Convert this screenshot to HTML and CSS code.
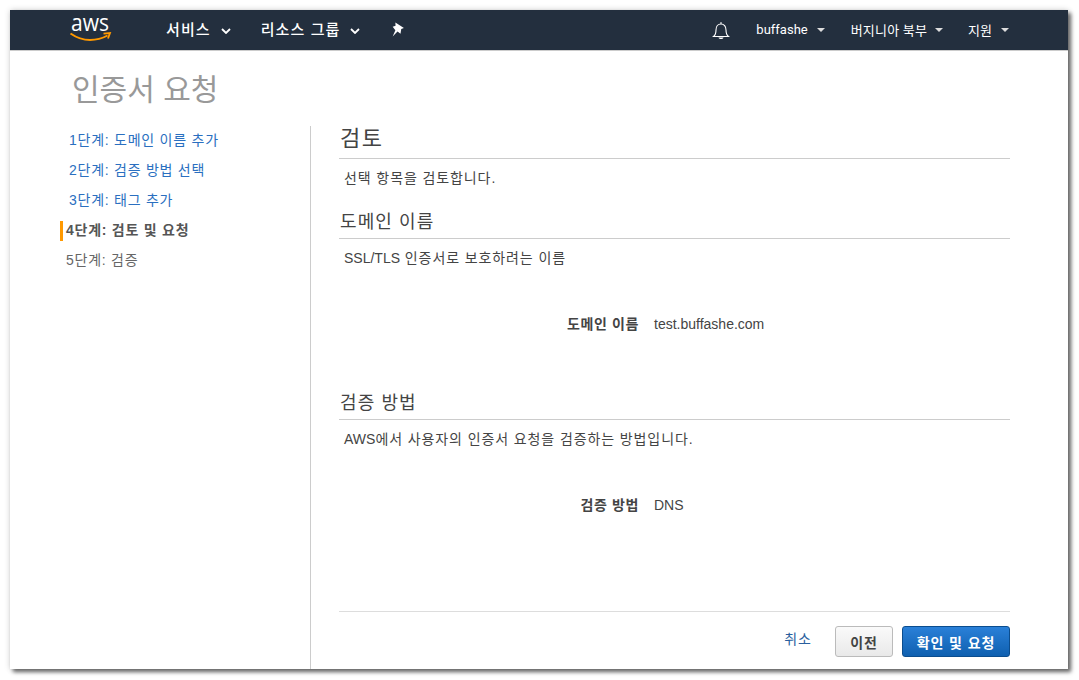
FILE: index.html
```html
<!DOCTYPE html>
<html lang="ko">
<head>
<meta charset="utf-8">
<title>인증서 요청</title>
<link rel="stylesheet" href="styles.css">
</head>
<body>
<div class="window">
  <header class="nav">
    <svg class="logo" viewBox="0 -6 42 34" width="42" height="34">
      <text x="1" y="15" class="logo-text" textLength="38" lengthAdjust="spacingAndGlyphs">aws</text>
      <path d="M0.5 17.5C7 22 13 24 20 24C27 24 33 22 37.5 19.5" fill="none" stroke="#f90" stroke-width="2"/>
      <path d="M33.5 17.6L40 17L38 22.5" fill="none" stroke="#f90" stroke-width="1.8"/>
    </svg>
    <a class="nav-main first">서비스</a>
    <svg class="chev" viewBox="0 0 10 6" width="10" height="6"><path d="M1 1L5 5L9 1" fill="none" stroke="#fff" stroke-width="1.8"/></svg>
    <a class="nav-main second">리소스 그룹</a>
    <svg class="chev" viewBox="0 0 10 6" width="10" height="6"><path d="M1 1L5 5L9 1" fill="none" stroke="#fff" stroke-width="1.8"/></svg>
    <svg class="pin" viewBox="0 0 14 14" width="15" height="15"><path d="M5 0.500L13 5.500L10.500 6.500L9.800 11L7 8.800L2.500 13.500L5 7.600L2.500 4.500L5.200 3.400Z" fill="#fff"/></svg>
    <div class="spacer"></div>
    <svg class="bell" viewBox="0 0 18 20" width="18" height="20"><path d="M1.500 15.500C3.500 14 4 12 4 9C4 5.500 6 3 9 3C12 3 14 5.500 14 9C14 12 14.500 14 16.500 15.500Z" fill="none" stroke="#fff" stroke-width="1.100"/><path d="M9 1V3" stroke="#fff"/><path d="M6.500 16.500C7 18.500 11 18.500 11.500 16.500Z" fill="#fff"/></svg>
    <a class="nav-sub user">buffashe</a>
    <span class="caret"></span>
    <a class="nav-sub region">버지니아 북부</a>
    <span class="caret tight"></span>
    <a class="nav-sub support">지원</a>
    <span class="caret"></span>
  </header>
  <h1 class="page-title">인증서 요청</h1>
  <div class="layout">
    <nav class="steps">
      <a class="step link">1단계: 도메인 이름 추가</a>
      <a class="step link">2단계: 검증 방법 선택</a>
      <a class="step link">3단계: 태그 추가</a>
      <a class="step current">4단계: 검토 및 요청</a>
      <a class="step todo">5단계: 검증</a>
    </nav>
    <main class="content">
      <h2 class="title-lg">검토</h2>
      <p class="desc">선택 항목을 검토합니다.</p>
      <h3 class="title-md domain-title">도메인 이름</h3>
      <p class="desc"><span class="latin">SSL/TLS</span> 인증서로 보호하려는 이름</p>
      <dl class="field domain-field"><dt>도메인 이름</dt><dd>test.buffashe.com</dd></dl>
      <h3 class="title-md method-title">검증 방법</h3>
      <p class="desc"><span class="latin">AWS</span>에서 사용자의 인증서 요청을 검증하는 방법입니다.</p>
      <dl class="field method-field"><dt>검증 방법</dt><dd>DNS</dd></dl>
      <footer class="actions">
        <a class="cancel">취소</a>
        <button class="btn prev">이전</button>
        <button class="btn primary">확인 및 요청</button>
      </footer>
    </main>
  </div>
</div>
</body>
</html>
```
FILE: styles.css
```css
* { box-sizing: border-box; }
html, body { margin: 0; height: 100%; background: #fff; }
body {
  padding: 10px 0 0 10px;
  overflow: hidden;
  font-family: "Liberation Sans", "Noto Sans CJK KR", sans-serif;
  font-size: 14px;
  color: #444;
}
.window {
  width: 1058px;
  height: 659px;
  background: #fff;
  display: flex;
  flex-direction: column;
  box-shadow: 3px 3px 4px #666, 0 0 6px rgba(0,0,0,.18);
}
.nav {
  height: 41px;
  flex: none;
  background: #232f3e;
  border-bottom: 1px solid #ccc;
  display: flex;
  align-items: center;
  color: #fff;
  padding-left: 60px;
}
.logo { align-self: flex-start; flex: none; overflow: visible; }
.logo-text { font: 23px "Open Sans", "Liberation Sans", sans-serif; fill: #fff; }
.nav-main { font-size: 15px; font-weight: 500; letter-spacing: 1.1px; margin-top: -4px; }
.first { margin-left: 54px; }
.second { margin-left: 30px; }
.chev { margin-left: 10px; margin-top: 1px; }
.pin { margin-left: 30px; margin-top: -2px; }
.spacer { flex: 1; }
.bell { margin-right: 26px; margin-top: 1px; }
.nav-sub {
  font-size: 13px;
  font-family: "Roboto", "Noto Sans CJK KR", sans-serif;
  font-weight: 400;
  margin-top: -2px;
}
.user { letter-spacing: 0; }
.region { margin-left: 26px; letter-spacing: .2px; }
.support { margin-left: 25px; }
.caret {
  width: 0; height: 0;
  margin-left: 9px;
  border: 4px solid transparent;
  border-top: 4px solid #ddd;
  border-bottom: 0;
}
.tight { margin-left: 8px; }
.caret:last-child { margin-right: 59px; }
.page-title {
  margin: 0;
  height: 75px;
  padding: 20px 0 0 62px;
  font-size: 30px;
  line-height: 38px;
  font-weight: 400;
  color: #999;
}
.layout { flex: 1; display: flex; min-height: 0; }
.steps {
  width: 301px;
  flex: none;
  border-right: 1px solid #ccc;
  padding: 0 0 0 50px;
  display: flex;
  flex-direction: column;
}
.step { height: 30px; line-height: 28px; white-space: nowrap; letter-spacing: .75px; }
.link { color: #2a6fc0; padding-left: 9px; }
.current {
  position: relative;
  font-weight: 700;
  color: #555;
  padding-left: 6px;
}
.current::before {
  content: "";
  position: absolute;
  left: 0; top: 5px;
  width: 3px; height: 20px;
  background: #f90;
}
.todo { color: #666; padding-left: 6px; }
.content {
  flex: 1;
  padding: 0 58px 0 28px;
  display: flex;
  flex-direction: column;
  min-width: 0;
}
.title-lg {
  margin: 0;
  height: 33px;
  padding-left: 1px;
  font-size: 22px;
  line-height: 26px;
  font-weight: 400;
  letter-spacing: 1.5px;
  color: #444;
  border-bottom: 1px solid #ccc;
}
.title-md {
  margin: 0;
  height: 31px;
  padding-left: 1px;
  font-size: 18px;
  line-height: 28px;
  font-weight: 400;
  letter-spacing: 1.1px;
  color: #444;
  border-bottom: 1px solid #ccc;
}
.domain-title { margin-top: 19px; }
.method-title { margin-top: 54px; }
.desc { margin: 0; padding: 9px 0 1px 5px; line-height: 20px; height: 30px; letter-spacing: .9px; }
.latin { letter-spacing: 0; }
.field { margin: 0; display: flex; line-height: 20px; }
.domain-field { margin-top: 45px; }
.method-field { margin-top: 45px; }
.field dt { width: 300px; text-align: right; font-weight: 700; color: #444; letter-spacing: .6px; }
.field dd { margin: 0 0 0 15px; }
.domain-field + .method-title { margin-top: 55px; }
.actions {
  margin-top: auto;
  margin-bottom: 12px;
  height: 46px;
  padding-top: 14px;
  border-top: 1px solid #ddd;
  display: flex;
  justify-content: flex-end;
  align-items: flex-start;
}
.cancel { color: #2a5f9e; line-height: 26px; margin-right: 23px; letter-spacing: 1px; }
.btn {
  height: 31px;
  border-radius: 3px;
  font: 700 14px "Liberation Sans", "Noto Sans CJK KR", sans-serif;
  padding: 0;
  letter-spacing: .9px;
}
.prev {
  width: 58px;
  color: #444;
  background: linear-gradient(#fafafa, #e9e9e9);
  border: 1px solid #bbb;
  margin-right: 9px;
}
.primary {
  width: 108px;
  color: #fff;
  background: linear-gradient(#2a80d8, #0f60b0);
  border: 1px solid #0b4d8e;
}
```
